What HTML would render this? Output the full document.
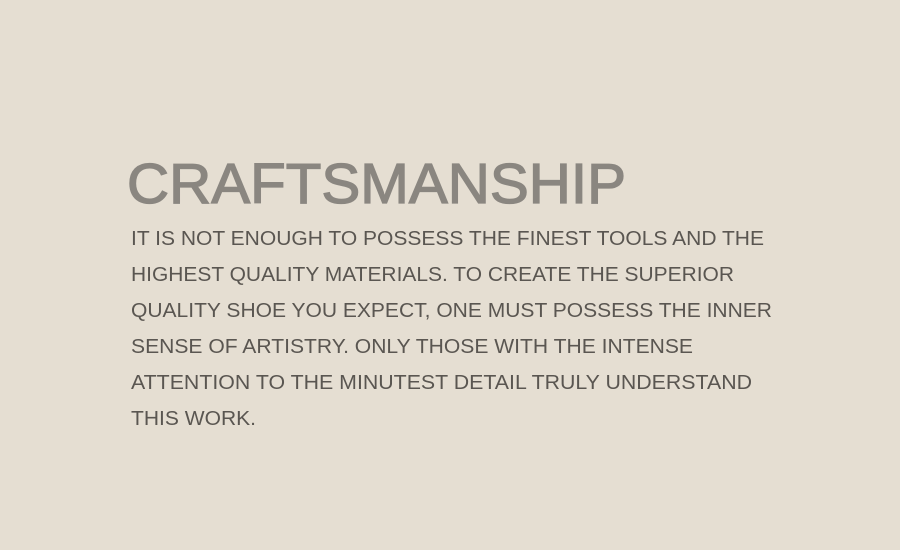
<!DOCTYPE html>
<html><head><meta charset="utf-8"><style>
html,body{margin:0;padding:0;background:#e5ded2;width:900px;height:550px;overflow:hidden}
svg{display:block}
</style></head><body>
<svg width="900" height="550" xmlns="http://www.w3.org/2000/svg">
<rect width="900" height="550" fill="#e5ded2"/>
<text x="127" y="203" font-family="Liberation Sans, sans-serif" font-size="57" fill="#8a8680" stroke="#8a8680" stroke-width="1.3" textLength="499" lengthAdjust="spacingAndGlyphs">CRAFTSMANSHIP</text>
<g font-family="Liberation Sans, sans-serif" font-size="20" fill="#5a5651">
<text x="131" y="245" textLength="633" lengthAdjust="spacingAndGlyphs">IT IS NOT ENOUGH TO POSSESS THE FINEST TOOLS AND THE</text>
<text x="131" y="281" textLength="603" lengthAdjust="spacingAndGlyphs">HIGHEST QUALITY MATERIALS. TO CREATE THE SUPERIOR</text>
<text x="131" y="317" textLength="641" lengthAdjust="spacingAndGlyphs">QUALITY SHOE YOU EXPECT, ONE MUST POSSESS THE INNER</text>
<text x="131" y="353" textLength="562" lengthAdjust="spacingAndGlyphs">SENSE OF ARTISTRY. ONLY THOSE WITH THE INTENSE</text>
<text x="131" y="389" textLength="621" lengthAdjust="spacingAndGlyphs">ATTENTION TO THE MINUTEST DETAIL TRULY UNDERSTAND</text>
<text x="131" y="425" textLength="125" lengthAdjust="spacingAndGlyphs">THIS WORK.</text>
</g>
</svg>
</body></html>
